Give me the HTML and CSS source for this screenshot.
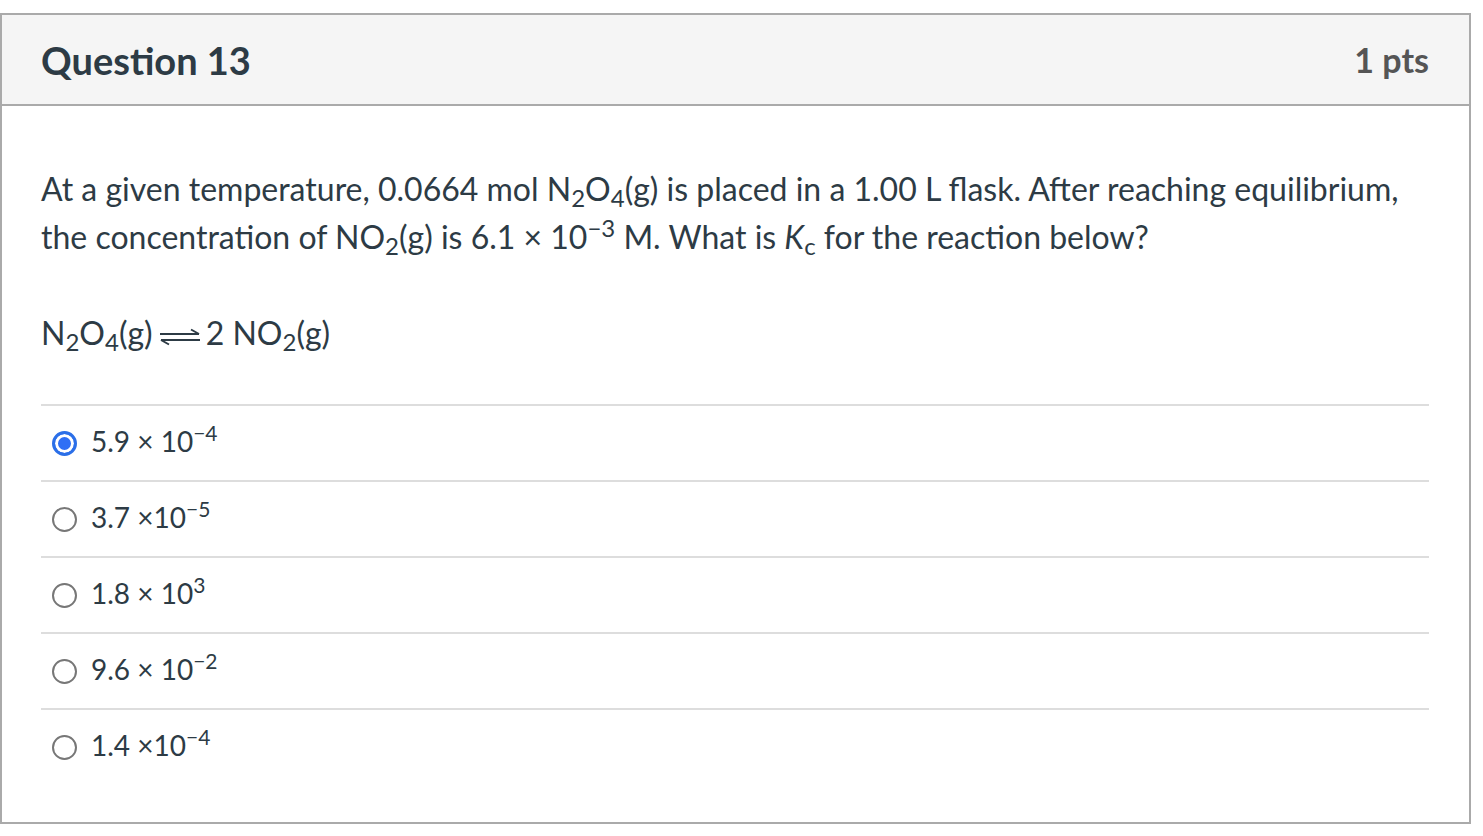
FILE: index.html
```html
<html lang="en">
 <head>
  <meta charset="UTF-8">
  <title>Question 13</title>
  <link rel="stylesheet" href="styles.css">
 </head>
 <body>
  <div class="question">
   <div class="question-header">
    <h2 class="question-title">Question 13</h2>
    <div class="question-points">1 pts</div>
   </div>
   <div class="question-body">
    <p class="question-text">At a given temperature, 0.0664 mol N<sub>2</sub>O<sub>4</sub>(g) is placed in a 1.00 L flask. After reaching equilibrium, the concentration of NO<sub>2</sub>(g) is 6.1 × 10<sup>−3</sup> M. What is <i>K</i><sub>c</sub> for the reaction below?</p>
    <p class="question-text equation">N<sub>2</sub>O<sub>4</sub>(g)<svg class="eq-arrow" width="42" height="18" viewBox="0 0 42 18">
      <path d="M1 6H40M40 6L32 1.5" />
      <path d="M41 12H2M2 12L10 16.5" />
     </svg>2 NO<sub>2</sub>(g)</p>
    <div class="answers">
     <label class="answer">
      <span class="radio checked"></span>
      <span class="answer-text">5.9 × 10<sup>−4</sup></span>
     </label>
     <label class="answer">
      <span class="radio"></span>
      <span class="answer-text">3.7 ×10<sup>−5</sup></span>
     </label>
     <label class="answer">
      <span class="radio"></span>
      <span class="answer-text">1.8 × 10<sup>3</sup></span>
     </label>
     <label class="answer">
      <span class="radio"></span>
      <span class="answer-text">9.6 × 10<sup>−2</sup></span>
     </label>
     <label class="answer">
      <span class="radio"></span>
      <span class="answer-text">1.4 ×10<sup>−4</sup></span>
     </label>
    </div>
   </div>
  </div>
 </body>
</html>
```

FILE: styles.css
```css
* {
    margin: 0;
    padding: 0;
    box-sizing: border-box;
    font-family: 'Lato', 'Liberation Sans', sans-serif;
}

body {
    background: white;
    color: #2d3b45;
    padding-top: 13px;
}

.question {
    width: 1471px;
    border: 2px solid #aaaaaa;
    background: white;
}

.question-header {
    height: 91px;
    background: #f5f5f5;
    border-bottom: 2px solid #aaaaaa;
    display: flex;
    align-items: center;
    justify-content: space-between;
    padding: 0 40px 0 39px;
}

.question-title {
    font-size: 38px;
    font-weight: 700;
    color: #2d3b45;
}

.question-points {
    font-size: 34px;
    font-weight: 700;
    color: #555555;
}

.question-body {
    padding: 59px 40px 38px 39px;
}

.question-text {
    font-size: 32px;
    line-height: 48px;
    margin-bottom: 48px;
}

.question-text.equation {
    margin-bottom: 47px;
}

sub, sup {
    font-size: 0.75em;
    line-height: 0;
    vertical-align: 0;
    position: relative;
}

sub {
    bottom: -0.25em;
}

sup {
    top: -0.5em;
}

.eq-arrow {
    margin: 0 5px 0 6px;
    vertical-align: -1px;
}

.eq-arrow path {
    fill: none;
    stroke: #2d3b45;
    stroke-width: 2;
}

.answer {
    height: 76px;
    border-top: 2px solid #dddddd;
    display: flex;
    align-items: center;
    gap: 14px;
    padding-left: 11px;
    padding-top: 1px;
}

.radio {
    width: 25px;
    height: 25px;
    border-radius: 50%;
    border: 2px solid #777777;
    background: white;
    flex-shrink: 0;
}

.radio.checked {
    border: 3px solid #2b6fe8;
    background: #2f6ff5;
    box-shadow: inset 0 0 0 3px white;
}

.answer-text {
    font-size: 28px;
    color: #2d3b45;
    padding-bottom: 6px;
}
```
